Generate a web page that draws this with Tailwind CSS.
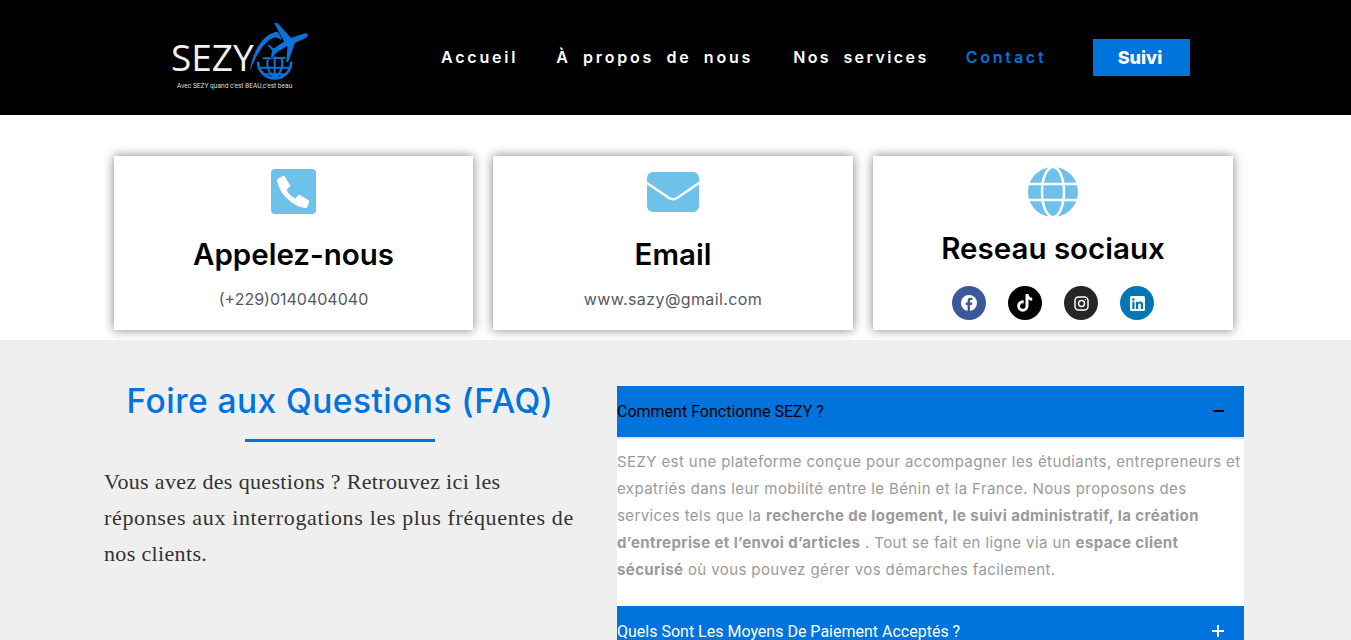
<!DOCTYPE html>
<html lang="fr">
<head>
  <meta charset="UTF-8"/>
  <meta name="viewport" content="width=device-width, initial-scale=1.0"/>
  <title>SEZY - Contact</title>
  <script src="https://cdn.jsdelivr.net/npm/@tailwindcss/browser@4"></script>
</head>
<body class="bg-[#efefef] font-['Inter',sans-serif] overflow-hidden">

  <!-- Header -->
  <header class="h-[115px] bg-black flex items-center pl-[170px]">
    <div class="w-[139px] h-[95px] flex flex-col shrink-0 relative">
      <div class="font-['Open_Sans',sans-serif] text-[#f2f2f2] text-[37px] leading-none mt-[28px] ml-[1px]">SEZY</div>
      <!-- logo mark: globe + plane -->
      <svg class="absolute left-[74px] top-[5px]" width="70" height="75" viewBox="0 0 210 225" fill="none">
        <path d="M18 168C22 120 52 62 92 52c14-3 26 2 34 10l-16 12c-8-6-16-8-24-5C58 82 32 128 18 168z" fill="#0a72d8"/>
        <path d="M42 140a50 50 0 0 0 100 0" stroke="#0a72d8" stroke-width="8"/>
        <path d="M56 130l84-2M44 158h96M62 178h60M92 124v66M72 130c-6 22 2 44 20 60M112 128c8 22 0 44-20 62" stroke="#0a72d8" stroke-width="6"/>
        <path d="M192 58c3 6-3 11-12 15l-26 12-20 56-9 4 4-50-30 18-14 16-6-2 4-20-14-17 6-3 14 12 30-20-30-54 10-4 42 46 40-13c5-1 9 1 11 4z" fill="#0a72d8" stroke="#000" stroke-width="3"/>
      </svg>
      <div class="font-['Roboto',sans-serif] text-[#dedede] text-[6.600px] leading-none mt-[8px] ml-[7px] whitespace-nowrap">Avec SEZY quand c'est BEAU,c'est beau</div>
    </div>
    <nav class="flex items-center ml-[132px] font-['Inter',sans-serif] font-semibold text-[16px] text-white">
      <a class="mr-[38px] pb-[2px] tracking-[2.800px]">Accueil</a>
      <a class="mr-[40px] pb-[2px] tracking-[2.800px] [word-spacing:5.500px]">À propos de nous</a>
      <a class="mr-[37px] pb-[2px] tracking-[2.400px] [word-spacing:6px]">Nos services</a>
      <a class="mr-[47px] pb-[2px] tracking-[2.800px] text-[#0073dd]">Contact</a>
      <a class="w-[97px] h-[37px] bg-[#0073dd] flex items-center justify-center pr-[4px] font-extrabold text-[18px]">Suivi</a>
    </nav>
  </header>

  <!-- Contact cards -->
  <section class="bg-white h-[225px] pt-[41px] pl-[114px]">
    <div class="flex gap-[20px]">
      <div class="w-[359px] h-[174px] bg-white shadow-[0_0_10px_rgba(0,0,0,0.5)] flex flex-col items-center">
        <svg class="mt-[13px]" width="45" height="45" viewBox="0 0 45 45">
          <rect width="45" height="45" rx="4" fill="#6ec1e8"/>
          <path d="M6.500 10.500L13 7l6 10-4 3.500c2 4.500 5 7.500 9.500 9.500l3.500-4 10 6-2.500 6.500C25 38.500 8.500 27 6.500 10.500z" fill="#fff" stroke="#fff" stroke-linejoin="round"/>
        </svg>
        <h3 class="mt-[23px] text-[29.500px] leading-[34px] font-semibold text-black">Appelez-nous</h3>
        <p class="mt-[16px] text-[16px] leading-[24px] text-[#54595f]">(+229)0140404040</p>
      </div>
      <div class="w-[360px] h-[174px] bg-white shadow-[0_0_10px_rgba(0,0,0,0.5)] flex flex-col items-center">
        <svg class="mt-[16px]" width="52" height="40" viewBox="0 0 52 40">
          <rect width="52" height="40" rx="6" fill="#6ec1e8"/>
          <path d="M0 11l22 15c2.500 1.600 5.500 1.600 8 0l22-15" fill="none" stroke="#fff" stroke-width="2.500"/>
        </svg>
        <h3 class="mt-[25px] text-[29.500px] leading-[34px] font-semibold text-black">Email</h3>
        <p class="mt-[16px] text-[16px] leading-[24px] tracking-[0.400px] text-[#54595f]">www.sazy@gmail.com</p>
      </div>
      <div class="w-[360px] h-[174px] bg-white shadow-[0_0_10px_rgba(0,0,0,0.5)] flex flex-col items-center">
        <svg class="mt-[11px]" width="50" height="50" viewBox="0 0 50 50">
          <circle cx="25" cy="25" r="25" fill="#6ec1e8"/>
          <path d="M0 17h50M0 33h50" stroke="#fff" stroke-width="2.500"/>
          <ellipse cx="25" cy="25" rx="11" ry="25" fill="none" stroke="#fff" stroke-width="2.500"/>
        </svg>
        <h3 class="mt-[14px] text-[29.500px] leading-[34px] font-semibold text-black">Reseau sociaux</h3>
        <div class="mt-[21px] flex gap-[22px]">
          <span class="w-[34px] h-[34px] rounded-full bg-[#3b5998] flex items-center justify-center">
            <svg width="16" height="16" viewBox="0 0 16 16"><circle cx="8" cy="8" r="8" fill="#fff"/><path d="M9 16V10h2l.4-2.400H9V6.200c0-.8.300-1.200 1.200-1.200h1.200V3c-.6-.1-1.200-.2-1.800-.2-1.900 0-3 1.100-3 3.100v1.700H4.700V10h1.900v6z" fill="#3b5998"/></svg>
          </span>
          <span class="w-[34px] h-[34px] rounded-full bg-black flex items-center justify-center">
            <svg width="16" height="18" viewBox="0 0 16 18"><path d="M8.500 0h3c.2 2.200 1.500 3.600 3.700 3.800v3c-1.400 0-2.600-.4-3.700-1.200V12a5.700 5.700 0 1 1-5.700-5.700c.3 0 .6 0 .9.100v3.100a2.700 2.700 0 1 0 1.800 2.500z" fill="#fff"/></svg>
          </span>
          <span class="w-[34px] h-[34px] rounded-full bg-[#262626] flex items-center justify-center">
            <svg width="15" height="15" viewBox="0 0 15 15" fill="none" stroke="#fff" stroke-width="1.500"><rect x="1" y="1" width="13" height="13" rx="3.500"/><circle cx="7.500" cy="7.500" r="3"/><circle cx="11.300" cy="3.700" r=".6" fill="#fff" stroke="none"/></svg>
          </span>
          <span class="w-[34px] h-[34px] rounded-full bg-[#0077b5] flex items-center justify-center">
            <svg width="15" height="15" viewBox="0 0 15 15"><rect width="15" height="15" rx="1.500" fill="#fff"/><path d="M2.300 5.700h2.200V13H2.300zM3.400 2.200a1.300 1.300 0 1 1 0 2.600 1.300 1.300 0 0 1 0-2.600zM6 5.700h2.100v1c.4-.7 1.200-1.200 2.300-1.200 2.200 0 2.600 1.500 2.600 3.400V13h-2.200V9.400c0-.9 0-1.900-1.200-1.900s-1.400.9-1.400 1.900V13H6z" fill="#0077b5"/></svg>
          </span>
        </div>
      </div>
    </div>
  </section>

  <!-- FAQ -->
  <section class="h-[300px] flex pt-[46px] pl-[104px]">
    <div class="w-[469px] shrink-0">
      <div class="w-[472px] flex flex-col items-center -mt-[4px]">
        <h2 class="text-[33.500px] leading-[38px] tracking-[0.450px] font-medium text-[#0073dd] whitespace-nowrap">Foire aux Questions (FAQ)</h2>
        <div class="w-[190px] h-[3px] bg-[#0073dd] mt-[19px]"></div>
      </div>
      <p class="mt-[22px] font-['Liberation_Serif',serif] text-[22px] leading-[36px] tracking-[0.350px] text-[#333] whitespace-nowrap">Vous avez des questions ? Retrouvez ici les<br/><span class="tracking-[0.650px]">réponses aux interrogations les plus fréquentes de</span><br/>nos clients.</p>
    </div>
    <div class="w-[627px] ml-[44px] shrink-0">
      <div class="h-[51px] bg-[#0073dd] flex items-center justify-between pr-[20px] font-['Roboto',sans-serif] text-[16px] text-black">
        <span class="pt-[1px]">Comment Fonctionne SEZY ?</span>
        <span class="w-[11px] h-[2px] bg-black mb-[2px]"></span>
      </div>
      <div class="h-[169px] bg-white border-t-2 border-[#e4e4e4] pt-[9px] text-[15px] leading-[27px] tracking-[0.400px] text-[#9a9a9a] whitespace-nowrap">
        <p>SEZY est une plateforme conçue pour accompagner les étudiants, entrepreneurs et<br/>expatriés dans leur mobilité entre le Bénin et la France. Nous proposons des<br/>services tels que la <strong class="font-bold">recherche de logement, le suivi administratif, la création</strong><br/><strong class="font-bold">d’entreprise et l’envoi d’articles</strong> . Tout se fait en ligne via un <strong class="font-bold">espace client</strong><br/><strong class="font-bold">sécurisé</strong> où vous pouvez gérer vos démarches facilement.</p>
      </div>
      <div class="h-[51px] bg-[#0073dd] flex items-center justify-between pr-[20px] font-['Roboto',sans-serif] text-[16px] text-white">
        <span>Quels Sont Les Moyens De Paiement Acceptés ?</span>
        <svg class="mb-[2px]" width="12" height="12" viewBox="0 0 12 12"><path d="M0 6h12M6 0v12" stroke="#fff" stroke-width="2"/></svg>
      </div>
    </div>
  </section>

</body>
</html>
